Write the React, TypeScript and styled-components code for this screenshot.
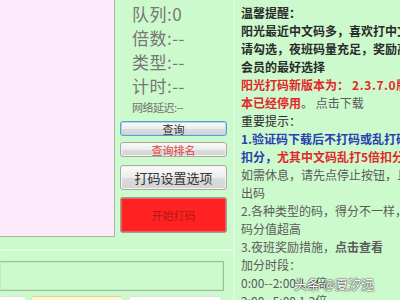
import React from "react";
import styled, { createGlobalStyle } from "styled-components";

const Global = createGlobalStyle`
  html, body { margin: 0; padding: 0; }
  body { background: #cdfacd; font-family: "Noto Sans CJK SC", "Noto Sans", sans-serif; }
`;

const Screen = styled.div`
  position: relative;
  width: 400px;
  height: 300px;
  overflow: hidden;
  display: flex;
  background: #cdfacd;
`;

const LeftArea = styled.div`
  width: 233px;
  height: 300px;
  flex: none;
  display: flex;
  flex-direction: column;
  overflow: hidden;
  border-right: 2px solid #def9de;
  & > * { flex: none; }
`;

const TopRow = styled.div`
  display: flex;
  height: 237px;
`;

const PinkPanel = styled.div`
  width: 114px;
  height: 236px;
  background: #fcebfa;
  border-right: 1px solid #a9b5a9;
  border-bottom: 1px solid #a9b5a9;
`;

const Side = styled.div`
  flex: 1;
  display: flex;
  flex-direction: column;
  padding: 2px 0 0 5px;
`;

const Stat = styled.div`
  padding-left: 12px;
  font-size: 17px;
  line-height: 24px;
  height: 24px;
  color: #767676;
  letter-spacing: 0.5px;
  white-space: nowrap;
`;

const SmallStat = styled.div`
  padding-left: 12px;
  font-size: 11px;
  line-height: 18px;
  height: 18px;
  color: #707070;
  letter-spacing: -0.5px;
  white-space: nowrap;
`;

const Btn = styled.div<{ $h: number; $tone?: "focus" | "red" | "plain"; $fs?: number; $color?: string; $mt: number }>`
  box-sizing: border-box;
  flex: none;
  width: 107px;
  height: ${(p) => p.$h}px;
  margin-top: ${(p) => p.$mt}px;
  border-radius: 3px;
  display: flex;
  align-items: center;
  justify-content: center;
  font-size: ${(p) => p.$fs ?? 11}px;
  color: ${(p) => p.$color ?? "#333"};
  white-space: nowrap;
  border: 1px solid ${(p) => (p.$tone === "focus" ? "#5aa0c8" : p.$tone === "red" ? "#9aa09a" : "#a8a8a8")};
  background: ${(p) =>
    p.$tone === "red"
      ? "#fe2222"
      : "linear-gradient(#fbfbfb 0%, #ececec 50%, #dcdcdc 51%, #d4d4d4 100%)"};
  box-shadow: ${(p) =>
    p.$tone === "focus"
      ? "inset 0 0 0 1px #a8dcf2"
      : p.$tone === "red"
      ? "inset 0 0 0 1px #f06060"
      : "inset 0 0 0 1px #f4f4f4"};
`;

const Stripe = styled.div`
  height: 2px;
  margin-top: 12px;
  background: #e4fde4;
`;

const InputBox = styled.div`
  box-sizing: border-box;
  height: 30px;
  width: 224px;
  margin-top: 10px;
  border: 1px solid #9cbf9c;
  border-left: none;
  box-shadow: inset 0 0 0 1px #c2e9c2;
`;

const BottomRow = styled.div`
  display: flex;
  margin-top: 5px;
`;

const Chip = styled.div<{ $w: number; $ml: number; $tone?: "yellow" }>`
  flex: none;
  width: ${(p) => p.$w}px;
  margin-left: ${(p) => p.$ml}px;
  height: 12px;
  border-radius: 2px;
  background: ${(p) => (p.$tone === "yellow" ? "#fdf6d8" : "#ffffff")};
  border-top: 1px solid ${(p) => (p.$tone === "yellow" ? "#e6d08a" : "#e0e0e0")};
`;

const Notice = styled.div`
  flex: 1;
  padding: 4px 0 0 6px;
  overflow: hidden;
  font-size: 12px;
  line-height: 18px;
`;

const Line = styled.div<{ $kind?: "head" | "strong" | "red" | "blue" | "gray" }>`
  white-space: nowrap;
  height: 18px;
  color: ${(p) =>
    p.$kind === "red"
      ? "#e3262a"
      : p.$kind === "blue"
      ? "#2a3fb0"
      : p.$kind === "gray"
      ? "#5a5a5a"
      : "#2a2a2a"};
  font-weight: ${(p) => (p.$kind === "head" || p.$kind === "strong" || p.$kind === "red" || p.$kind === "blue" ? 700 : 400)};
`;

const Span = styled.span<{ $kind: "red" | "gray" | "bold" | "spaced" }>`
  color: ${(p) => (p.$kind === "red" ? "#e3262a" : p.$kind === "gray" ? "#5a5a5a" : "inherit")};
  font-weight: ${(p) => (p.$kind === "gray" ? 400 : 700)};
  letter-spacing: ${(p) => (p.$kind === "spaced" ? "0.6px" : "normal")};
  margin-left: ${(p) => (p.$kind === "spaced" ? "3px" : "0")};
`;

const Watermark = styled.div`
  position: absolute;
  left: 294px;
  top: 274px;
  font-size: 13px;
  color: #ffffff;
  text-shadow: 0 0 2px #333, 0 0 1px #000;
  white-space: nowrap;
`;

export default function App() {
  return (
    <Screen>
      <Global />
      <LeftArea>
        <TopRow>
          <PinkPanel />
          <Side>
            <Stat>队列:0</Stat>
            <Stat>倍数:--</Stat>
            <Stat>类型:--</Stat>
            <Stat>计时:--</Stat>
            <SmallStat>网络延迟:--</SmallStat>
            <Btn $h={15} $mt={5} $tone="focus">查询</Btn>
            <Btn $h={15} $mt={6} $color="#e04040">查询排名</Btn>
            <Btn $h={25} $mt={8} $fs={13}>打码设置选项</Btn>
            <Btn $h={36} $mt={7} $tone="red" $color="#b41818">开始打码</Btn>
          </Side>
        </TopRow>
        <Stripe />
        <InputBox />
        <BottomRow>
          <Chip $w={25} $ml={0} />
          <Chip $w={90} $ml={7} $tone="yellow" />
          <Chip $w={90} $ml={8} />
        </BottomRow>
      </LeftArea>
      <Notice>
        <Line $kind="head">温馨提醒：</Line>
        <Line $kind="strong">阳光最近中文码多，喜欢打中文码的</Line>
        <Line $kind="strong">请勾选，夜班码量充足，奖励高，是</Line>
        <Line $kind="strong">会员的最好选择</Line>
        <Line $kind="red">
          阳光打码新版本为：<Span $kind="spaced">2.3.7.0</Span>版
        </Line>
        <Line $kind="red">
          本已经停用<Span $kind="gray">。 点击下载</Span>
        </Line>
        <Line>重要提示：</Line>
        <Line $kind="blue">1.验证码下载后不打码或乱打码</Line>
        <Line $kind="blue">
          扣分，<Span $kind="red">尤其中文码乱打5倍扣分</Span>
        </Line>
        <Line $kind="gray">如需休息，请先点停止按钮，且需</Line>
        <Line $kind="gray">出码</Line>
        <Line $kind="gray">2.各种类型的码，得分不一样，超</Line>
        <Line $kind="gray">码分值超高</Line>
        <Line $kind="gray">
          3.夜班奖励措施，<Span $kind="bold">点击查看</Span>
        </Line>
        <Line $kind="gray">加分时段：</Line>
        <Line $kind="gray">0:00--2:00 1.1倍</Line>
        <Line $kind="gray">2:00--5:00 1.2倍</Line>
      </Notice>
      <Watermark>头条 @夏汐远</Watermark>
    </Screen>
  );
}
